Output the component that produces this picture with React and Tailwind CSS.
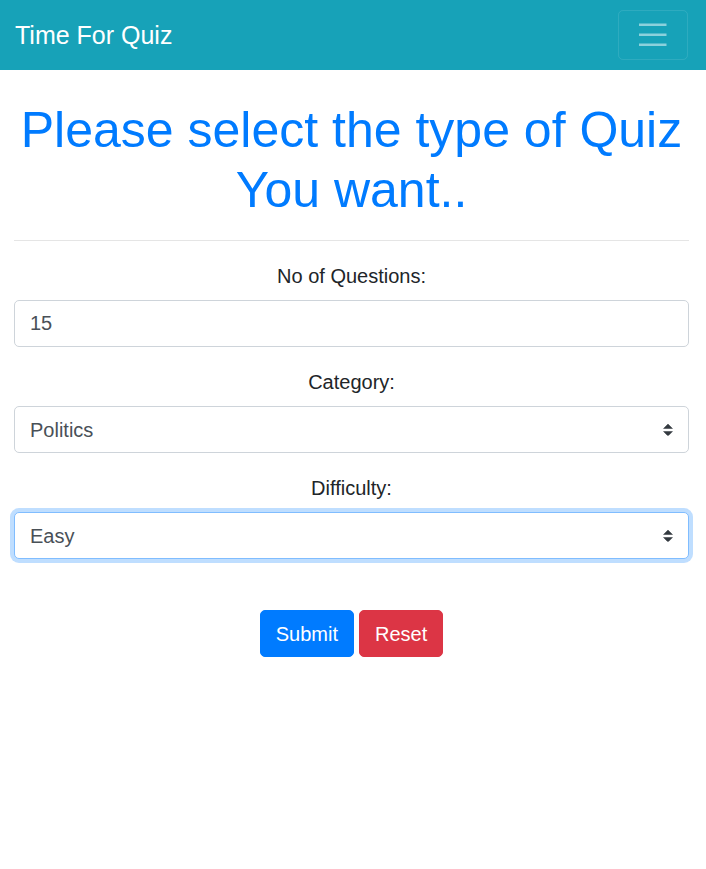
import { useState } from 'react';

const SelectArrows = () => (
  <svg
    className="pointer-events-none absolute right-[16px] top-1/2 -translate-y-1/2"
    width="10"
    height="12.5"
    viewBox="0 0 4 5"
  >
    <path fill="#343a40" d="M2 0L0 2h4zm0 5L0 3h4z" />
  </svg>
);

const App = () => {
  const [count, setCount] = useState('15');
  const [category, setCategory] = useState('Politics');
  const [difficulty, setDifficulty] = useState('Easy');

  const reset = () => {
    setCount('');
    setCategory('Politics');
    setDifficulty('Easy');
  };

  return (
    <div className="min-h-screen bg-white text-[#212529] font-['Liberation_Sans',Arial,sans-serif] text-[20px] leading-[1.5]">
      {/* Navbar */}
      <nav className="h-[70px] bg-[#17a2b8] flex items-center justify-between pl-[15px] pr-[18px]">
        <span className="text-white text-[25px] leading-none">Time For Quiz</span>
        <button className="w-[70px] h-[50px] rounded-[5px] border border-white/10 flex items-center justify-center">
          <svg width="37.5" height="37.5" viewBox="0 0 30 30">
            <path
              stroke="rgba(255,255,255,0.5)"
              strokeWidth="2"
              strokeLinecap="butt"
              strokeMiterlimit="10"
              d="M4 7h22M4 15h22M4 23h22"
            />
          </svg>
        </button>
      </nav>

      <div className="pl-[14px] pr-[17px] pt-[30px]">
        <h1 className="text-center text-[#007bff] text-[50px] leading-[1.2] font-normal">
          Please select the type of Quiz You want..
        </h1>
        <hr className="mt-[20px] mb-[20px] border-0 border-t border-black/10" />

        <form onSubmit={(e) => e.preventDefault()}>
          {/* No of questions */}
          <div className="mb-[20px]">
            <label className="block text-center mb-[9px]">No of Questions:</label>
            <input
              type="number"
              value={count}
              onChange={(e) => setCount(e.target.value)}
              className="block w-full h-[47px] px-[15px] border border-[#ced4da] rounded-[5px] text-[#495057] outline-none [appearance:textfield] [&::-webkit-inner-spin-button]:appearance-none"
            />
          </div>

          {/* Category */}
          <div className="mb-[20px]">
            <label className="block text-center mb-[9px]">Category:</label>
            <div className="relative">
              <select
                value={category}
                onChange={(e) => setCategory(e.target.value)}
                className="block w-full h-[47px] pl-[15px] pr-[35px] border border-[#ced4da] rounded-[5px] text-[#495057] bg-white appearance-none outline-none"
              >
                <option>Politics</option>
                <option>General Knowledge</option>
                <option>Sports</option>
                <option>History</option>
              </select>
              <SelectArrows />
            </div>
          </div>

          {/* Difficulty */}
          <div className="mb-[51px]">
            <label className="block text-center mb-[9px]">Difficulty:</label>
            <div className="relative">
              <select
                value={difficulty}
                onChange={(e) => setDifficulty(e.target.value)}
                className="block w-full h-[47px] pl-[15px] pr-[35px] border border-[#80bdff] rounded-[5px] text-[#495057] bg-white appearance-none outline-none shadow-[0_0_0_4px_rgba(0,123,255,0.25)]"
              >
                <option>Easy</option>
                <option>Medium</option>
                <option>Hard</option>
              </select>
              <SelectArrows />
            </div>
          </div>

          <div className="flex justify-center gap-[5px]">
            <button
              type="submit"
              className="h-[47px] px-[15px] rounded-[5px] bg-[#007bff] border border-[#007bff] text-white"
            >
              Submit
            </button>
            <button
              type="button"
              onClick={reset}
              className="h-[47px] px-[15px] rounded-[5px] bg-[#dc3545] border border-[#dc3545] text-white"
            >
              Reset
            </button>
          </div>
        </form>
      </div>
    </div>
  );
};

export default App;
